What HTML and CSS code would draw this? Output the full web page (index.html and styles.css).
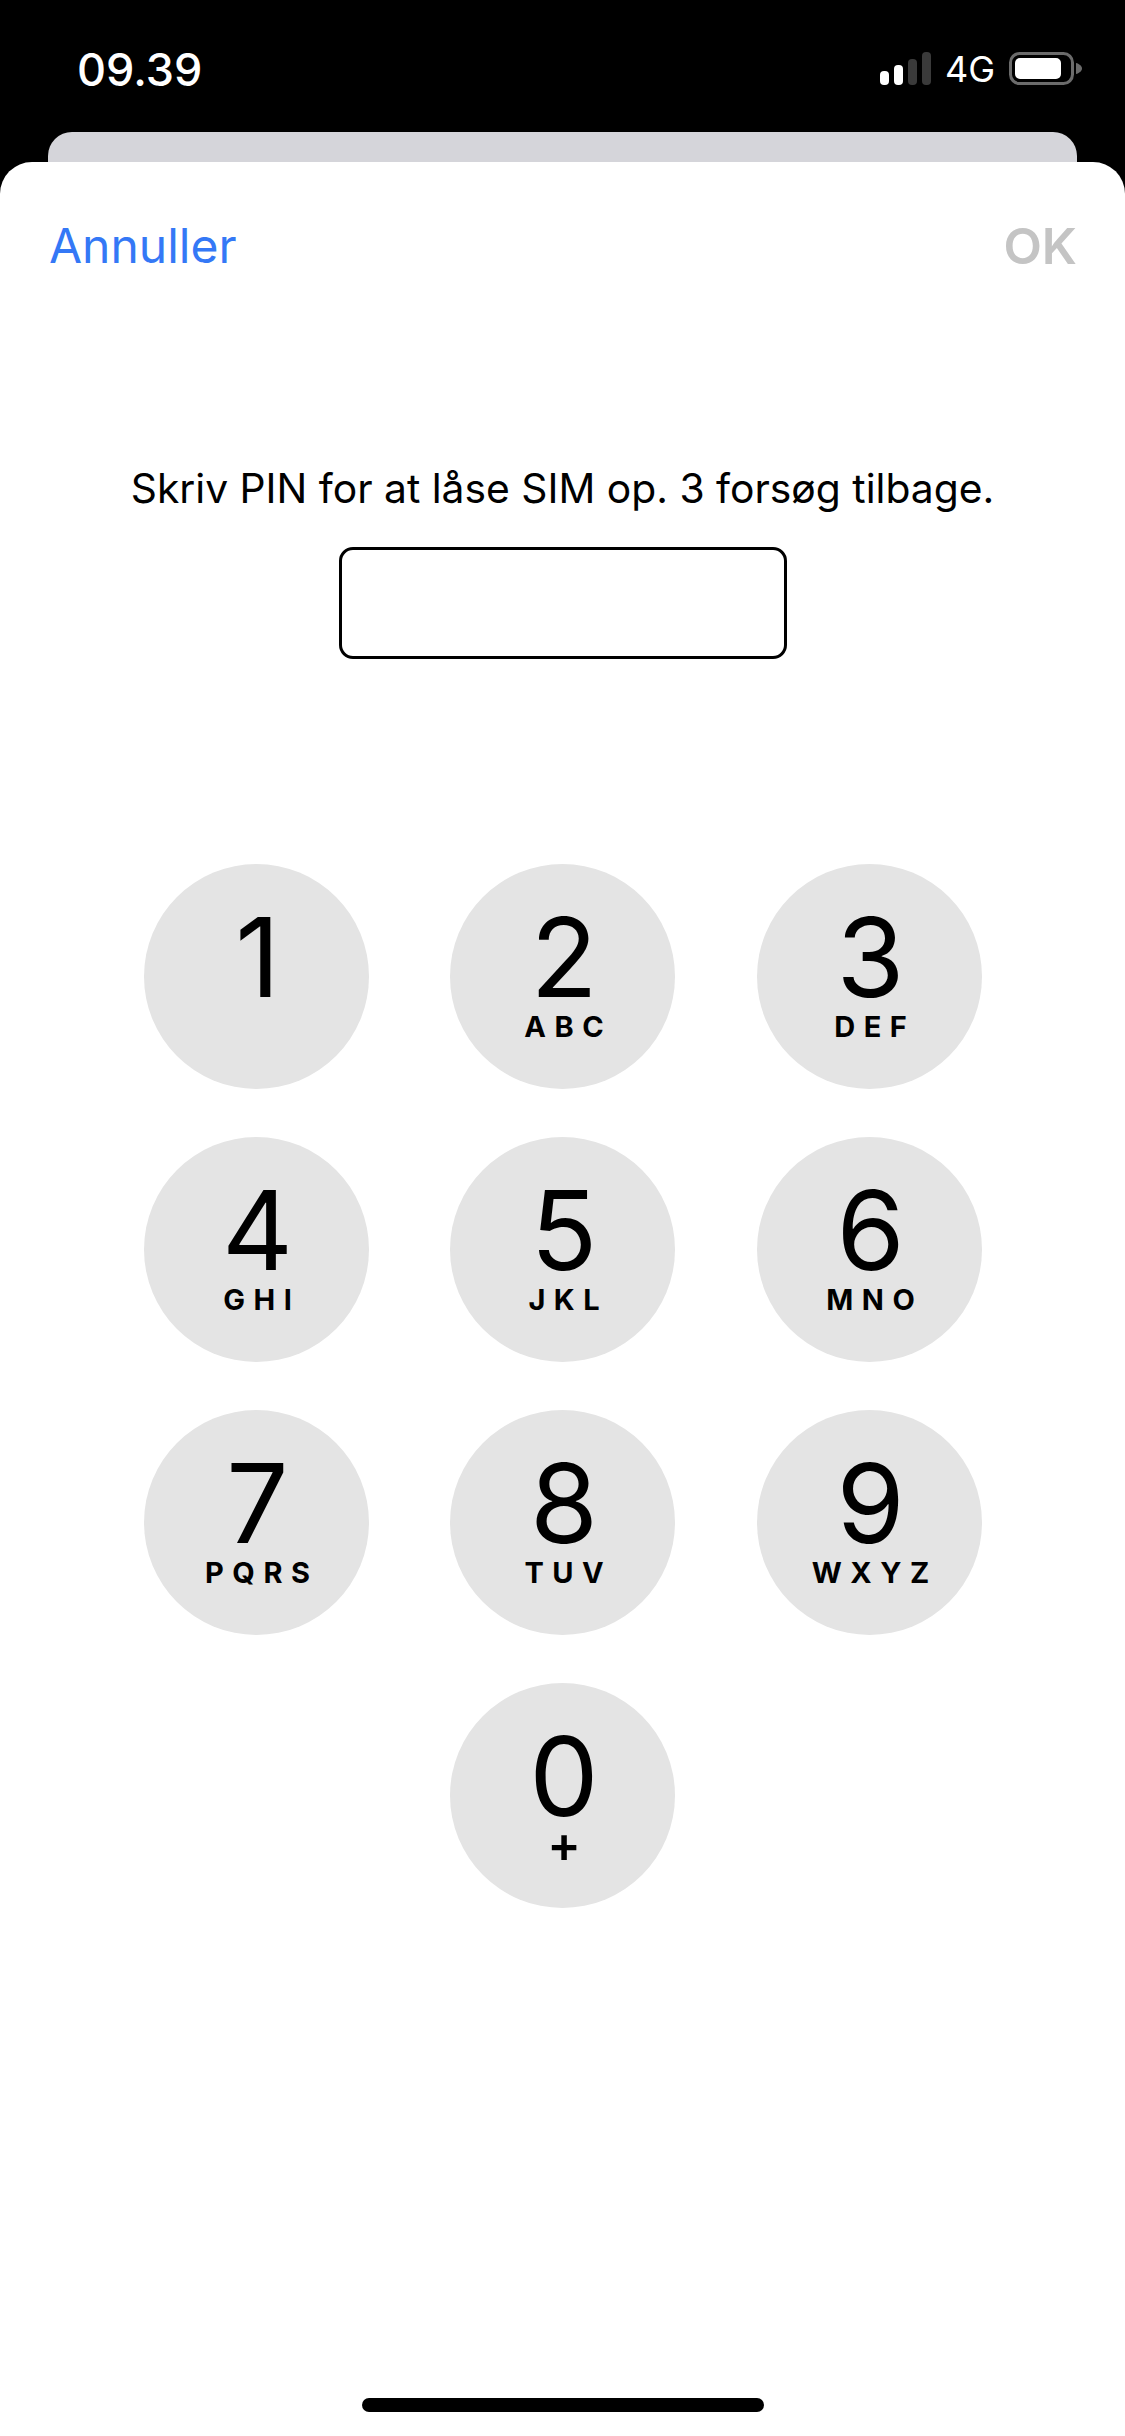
FILE: index.html
```html
<!DOCTYPE html>
<html lang="da">
<head>
<meta charset="utf-8">
<title>SIM PIN</title>
<link rel="stylesheet" href="styles.css">
</head>
<body>
<div class="screen">
  <header class="status">
    <span class="time">09.39</span>
    <div class="status-right">
      <svg class="signal" width="51" height="33" viewBox="0 0 51 33">
        <rect x="0" y="19" width="9" height="14" rx="4" fill="#fff"/>
        <rect x="14" y="13" width="9" height="20" rx="4" fill="#fff"/>
        <rect x="28" y="7" width="9" height="26" rx="4" fill="#3a3a3a"/>
        <rect x="42" y="0" width="9" height="33" rx="4" fill="#3a3a3a"/>
      </svg>
      <span class="net">4G</span>
      <svg class="battery" width="73" height="33" viewBox="0 0 73 33">
        <rect x="1.500" y="1.500" width="62" height="30" rx="9" fill="none" stroke="#6b6b6b" stroke-width="3"/>
        <rect x="6" y="6" width="46" height="21" rx="5" fill="#fff"/>
        <path d="M67 11c3 .8 6 3 6 5.500s-3 4.700-6 5.500z" fill="#6b6b6b"/>
      </svg>
    </div>
  </header>
  <div class="behind"></div>
  <main class="sheet">
    <nav class="nav">
      <span class="cancel">Annuller</span>
      <span class="ok">OK</span>
    </nav>
    <p class="prompt">Skriv PIN for at låse SIM op. 3 forsøg tilbage.</p>
    <div class="pin-box"></div>
    <div class="keypad">
      <div class="key"><span class="digit">1</span></div>
      <div class="key"><span class="digit">2</span><span class="letters">ABC</span></div>
      <div class="key"><span class="digit">3</span><span class="letters">DEF</span></div>
      <div class="key"><span class="digit">4</span><span class="letters">GHI</span></div>
      <div class="key"><span class="digit">5</span><span class="letters">JKL</span></div>
      <div class="key"><span class="digit">6</span><span class="letters">MNO</span></div>
      <div class="key"><span class="digit">7</span><span class="letters">PQRS</span></div>
      <div class="key"><span class="digit">8</span><span class="letters">TUV</span></div>
      <div class="key"><span class="digit">9</span><span class="letters">WXYZ</span></div>
      <div class="key zero"><span class="digit">0</span><span class="letters plus">+</span></div>
    </div>
    <div class="home-bar"></div>
  </main>
</div>
</body>
</html>
```
FILE: styles.css
```css
* { box-sizing: border-box; }
html, body { margin: 0; padding: 0; background: #000; }
body { font-family: Inter, "Liberation Sans", sans-serif; }
.screen {
  width: 1125px;
  height: 2436px;
  display: flex;
  flex-direction: column;
  overflow: hidden;
}
.status {
  height: 132px;
  flex: none;
  display: flex;
  justify-content: space-between;
  align-items: flex-start;
  padding: 48px 43px 0 77px;
  color: #fff;
}
.time { font-size: 45px; line-height: 44px; font-weight: 500; }
.status-right { display: flex; align-items: flex-start; gap: 14px; margin-top: 4px; }
.net { font-size: 36px; line-height: 34px; font-weight: 400; }
.behind {
  height: 30px;
  flex: none;
  margin: 0 48px;
  background: #d5d5da;
  border-radius: 24px 24px 0 0;
}
.sheet {
  flex: 1;
  background: #fff;
  border-radius: 32px 32px 0 0;
  display: flex;
  flex-direction: column;
  align-items: center;
  color: #000;
}
.nav {
  width: 100%;
  display: flex;
  justify-content: space-between;
  align-items: center;
  padding: 54px 48px 0 49px;
  font-size: 48px;
  line-height: 60px;
}
.cancel { color: #3478f6; }
.ok { color: #c4c4c4; font-weight: 600; font-size: 50px; }
.prompt {
  margin: 187px 0 0;
  font-size: 40.800px;
  line-height: 50px;
  text-align: center;
}
.pin-box {
  width: 448px;
  height: 112px;
  margin-top: 34px;
  border: 3px solid #000;
  border-radius: 14px;
  background: #fff;
}
.keypad {
  margin-top: 205px;
  display: grid;
  grid-template-columns: repeat(3, 225px);
  column-gap: 81.500px;
  row-gap: 48px;
}
.key {
  width: 225px;
  height: 225px;
  border-radius: 50%;
  background: #e4e4e4;
  display: flex;
  flex-direction: column;
  align-items: center;
  padding: 48px 0 0 3px;
}
.zero { grid-column: 2; }
.digit { font-size: 110px; line-height: 90px; font-weight: 380; height: 90px; }
.letters {
  font-size: 29px;
  line-height: 34px;
  font-weight: 700;
  letter-spacing: 8.500px;
  margin-right: -8.500px;
  margin-top: 8px;
}
.plus { font-size: 50px; font-weight: 600; line-height: 34px; letter-spacing: 0; margin-right: 0; margin-top: 6px; }
.home-bar {
  width: 402px;
  height: 14px;
  border-radius: 7px;
  background: #000;
  margin-top: auto;
  margin-bottom: 24px;
}
```
